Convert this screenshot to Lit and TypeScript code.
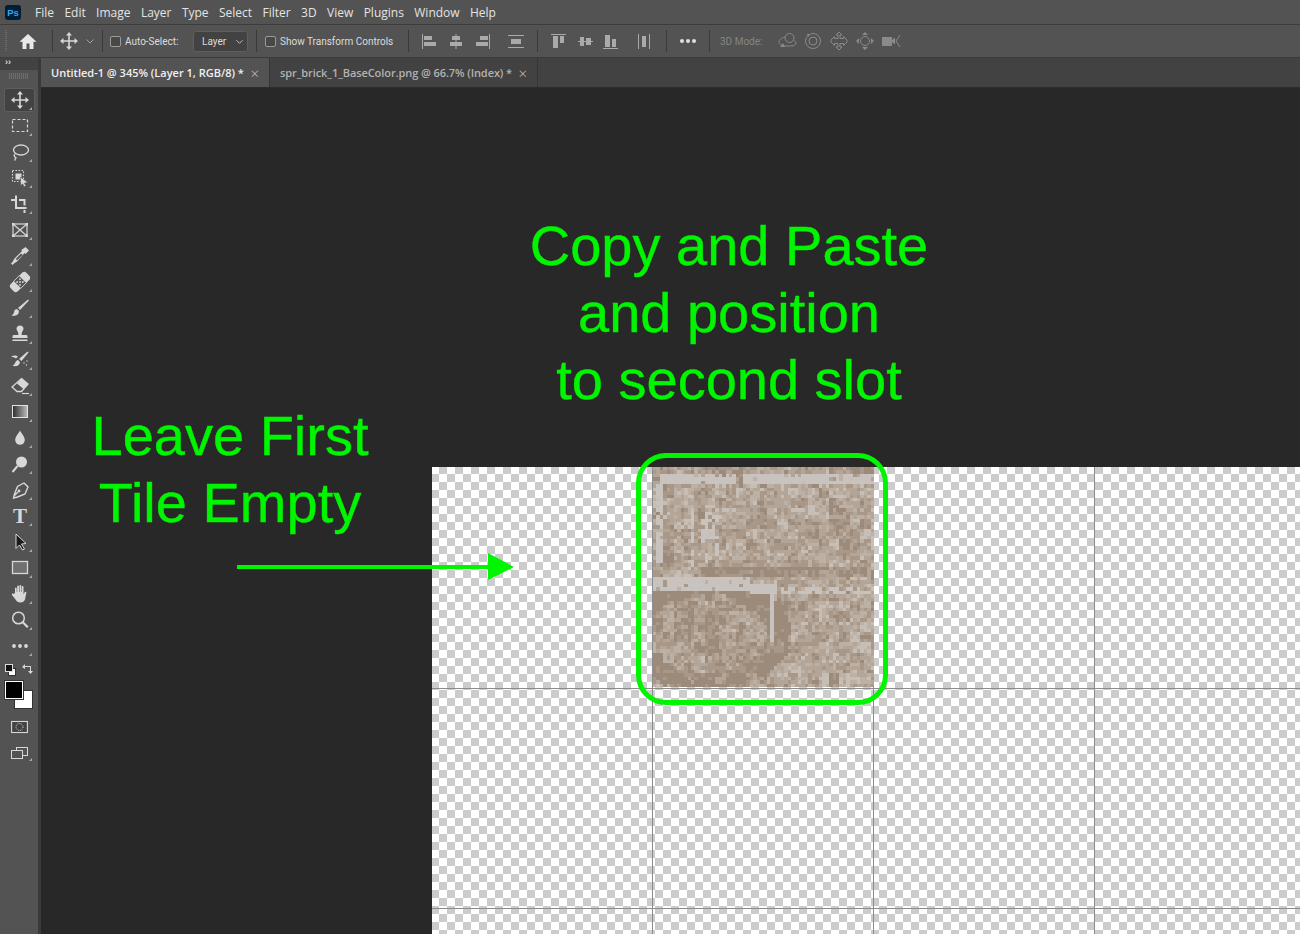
import { LitElement, html, css, svg } from 'lit';
import { customElement } from 'lit/decorators.js';

const MENU = ['File', 'Edit', 'Image', 'Layer', 'Type', 'Select', 'Filter', '3D', 'View', 'Plugins', 'Window', 'Help'];

// tile is 64x64 image pixels at 345%, so it gets generated instead of listed
function buildTile() {
  let seed = 4242;
  const rand = () => {
    seed = (seed + 0x6d2b79f5) | 0;
    let t = Math.imul(seed ^ (seed >>> 15), 1 | seed);
    t = (t + Math.imul(t ^ (t >>> 7), 61 | t)) ^ t;
    return ((t ^ (t >>> 14)) >>> 0) / 4294967296;
  };
  // coarse noise so the colours clump like the real texture
  const coarse: number[][] = [];
  for (let r = 0; r < 24; r++) {
    coarse.push([]);
    for (let c = 0; c < 24; c++) coarse[r].push(rand() - 0.5);
  }
  const cells = [];
  for (let r = 0; r < 64; r++) {
    for (let c = 0; c < 64; c++) {
      let v = 0.54 + (rand() - 0.5) * 0.42 + coarse[Math.floor(r / 3)][Math.floor(c / 3)] * 0.4;
      // lower left brick: dark rim, mottled inside
      const dx = (c - 15) / 24;
      const dy = (r - 48) / 16;
      const d = Math.sqrt(dx * dx + dy * dy);
      if (r > 35 && c < 40) {
        if (d < 0.72) v -= 0.12;
        else if (d < 1.02) v -= 0.36;
      }
      // dark joint under the top brick
      if (r >= 29 && r <= 31 && c > 13 && c < 62) v -= 0.3;
      if (r >= 25 && r <= 28 && c > 1 && c < 8) v -= 0.22;
      if (r < 2) v -= 0.1;
      let light = false;
      if (r >= 2 && r <= 4 && c > 1 && !(c > 23 && c < 26) && rand() > 0.1) light = true;
      const midTop = c < 28 ? 32 : c < 36 ? 34 : 35;
      const midBot = c < 28 ? 35 : c < 36 ? 36 : 36;
      if (r >= midTop && r <= midBot && rand() > (c < 36 ? 0.08 : 0.3)) light = true;
      if (c >= 1 && c <= 2 && r > 4 && r < 28 && rand() > 0.25) light = true;
      if (c === 34 && r > 35 && r < 51) light = true;
      if ((c === 11 || c === 15 || c === 18) && r > 12 && r < 29 && rand() > 0.45) light = true;
      if (c >= 14 && c <= 18 && r > 12 && r < 22 && rand() > 0.6) light = true;
      let fill = '#b3a699';
      if (light) fill = '#c8c3be';
      else if (v < 0.3) fill = '#9c8a7a';
      else if (v < 0.46) fill = '#a99888';
      else if (v < 0.62) fill = '#b3a699';
      else if (v < 0.76) fill = '#bdb0a4';
      else fill = '#c7beb5';
      cells.push({ r, c, fill });
    }
  }
  return cells;
}
const TILE = buildTile();

const ICON = '#d8d8d8';

const moveIcon = svg`<g fill="${ICON}"><path d="M9.200 4h1.600v12H9.200zM4 9.200h12v1.600H4z"/><path d="M10 1l3 3.500H7zM10 19l-3-3.500h6zM1 10l3.500-3v6zM19 10l-3.500 3V7z"/></g>`;

const tools = [
  { i: moveIcon, s: true },
  { i: svg`<rect x="2.500" y="3.500" width="15" height="12" fill="none" stroke="${ICON}" stroke-width="1.200" stroke-dasharray="3 2"/>` },
  { i: svg`<g fill="none" stroke="${ICON}" stroke-width="1.300"><ellipse cx="11" cy="8" rx="7.500" ry="5"/><path d="M5 12c-2 2 0 3 1 4-1 1-1 2-1.500 2.500"/></g>` },
  { i: svg`<rect x="2.500" y="2.500" width="11" height="11" fill="none" stroke="${ICON}" stroke-width="1.100" stroke-dasharray="1.500 1.500"/><rect x="5.500" y="5.500" width="6" height="6" fill="${ICON}"/><path d="M10.500 9l7.500 5.500-3.500.5 1.500 3-2 .8-1.400-3-2 2z" fill="${ICON}" stroke="#535353" stroke-width=".6"/>` },
  { i: svg`<path d="M1 5h4V1.500h2V13h9.500v2H5V7H1zM9 5h6.500v6.500h-2V7H9zM13.500 16h2v3h-2z" fill="${ICON}"/>` },
  { i: svg`<g fill="none" stroke="${ICON}" stroke-width="1.200"><rect x="3" y="4" width="14" height="12"/><path d="M3 4l14 12M17 4L3 16"/></g><g fill="${ICON}"><rect x="2" y="3" width="2.500" height="2.500"/><rect x="15.500" y="3" width="2.500" height="2.500"/><rect x="2" y="14.500" width="2.500" height="2.500"/><rect x="15.500" y="14.500" width="2.500" height="2.500"/></g>` },
  { i: svg`<path d="M15.500 1l3.500 3.500-3.500 3.500-1-1-6.500 7.500c-1.500 1.500-2.500 2-4 3L2.500 19l-1.500-1.500 1.500-1.500c1-1.500 1-2.500 2.500-4L12 5l-.8-1 1.600-1z" fill="${ICON}"/><path d="M11 7.500L5.800 13l1.300 1.300 5.400-5.300z" fill="#535353"/>` },
  { i: svg`<g transform="rotate(-45 10 10)"><rect x="-1" y="5" width="22" height="10" rx="3" fill="${ICON}"/><rect x="6" y="5" width="8" height="10" fill="#535353" stroke="${ICON}" stroke-width=".8"/><g fill="${ICON}"><circle cx="8" cy="8" r=".9"/><circle cx="12" cy="8" r=".9"/><circle cx="8" cy="12" r=".9"/><circle cx="12" cy="12" r=".9"/><circle cx="10" cy="10" r=".9"/></g></g>` },
  { i: svg`<path d="M18 1.500L8 10l2 2 9-9.500zM7 11c-3 0-2.500 3-3.500 4.500C3 16.500 2 17 1.500 17.500c3 1 7.500 0 7.500-4.500z" fill="${ICON}"/>` },
  { i: svg`<path d="M10 1.500c2.200 0 3.500 1.500 3.500 3.300 0 2-1.800 2.700-1.800 4.700V11H16c1 0 1.500.6 1.500 1.500V14h-15v-1.500C2.500 11.600 3 11 4 11h4.300V9.500c0-2-1.800-2.700-1.800-4.700C6.500 3 7.800 1.500 10 1.500zM2.500 15.500h15V17h-15z" fill="${ICON}"/>` },
  { i: svg`<path d="M17.500 1.500l1 1L11.500 11 9 9zM8 10c-2.500.5-2.500 3-3.500 4-.5.8-1 1-2 1.500 2.500 1.500 7 1 7.500-3.500zM1 6.500c3-1.500 5-1.500 7 0L6 8.500C4.500 7.500 3 7 1 6.500z" fill="${ICON}"/><g fill="${ICON}"><circle cx="14" cy="13" r=".7"/><circle cx="17" cy="11" r=".7"/><circle cx="16.500" cy="15" r=".7"/></g>` },
  { i: svg`<path d="M11.500 2.500L18 8l-6.500 7.500H7L2 11z" fill="none" stroke="${ICON}" stroke-width="1.300"/><path d="M11.500 2.500L18 8l-4.500 5L7 7.500z" fill="${ICON}"/><path d="M12 17.500h7" stroke="${ICON}" stroke-width="1.200"/>` },
  { i: svg`<defs><linearGradient id="gr"><stop offset="0" stop-color="#2c2c2c"/><stop offset="1" stop-color="#bdbdbd"/></linearGradient></defs><rect x="2.500" y="3.500" width="15" height="12" fill="url(#gr)" stroke="#e2e2e2" stroke-width="1"/>` },
  { i: svg`<path d="M10 2.500c1.500 3 4.800 6 4.800 9.500a4.800 4.800 0 01-9.600 0c0-3.500 3.300-6.500 4.800-9.500z" fill="${ICON}"/>` },
  { i: svg`<circle cx="11.500" cy="8" r="5.500" fill="${ICON}"/><path d="M7.500 12L2.500 18" stroke="${ICON}" stroke-width="2"/>` },
  { i: svg`<path d="M14 3l4 4-3 7-7.500 3-4 1 1-4 3-7.500zM3.500 16.500L8 12" fill="none" stroke="${ICON}" stroke-width="1.400"/><circle cx="9" cy="11" r="1.400" fill="${ICON}"/>` },
  { i: svg`<text x="10" y="17" text-anchor="middle" font-family="Liberation Serif, serif" font-weight="700" font-size="21" fill="${ICON}">T</text>` },
  { i: svg`<path d="M6 2l10 9.500-4.500.5 3 5-2 1-3-5-3.500 3.500z" fill="#1b1b1b" stroke="${ICON}" stroke-width="1"/>` },
  { i: svg`<rect x="2.500" y="3.500" width="15" height="12" fill="#707070" stroke="${ICON}" stroke-width="1.300"/>` },
  { i: svg`<path d="M5 9V4.500c0-1.200 1.600-1.200 1.700 0V8h.5V2.500c0-1.200 1.800-1.200 1.800 0V8h.5V2c0-1.200 1.800-1.200 1.800 0v6h.5V3c0-1.200 1.700-1.200 1.700 0v7.500l1-2c.7-1.300 2.300-.7 1.800.5L15 15.500c-.8 1.800-2.300 3-4.500 3-2.500 0-4-1-5-3L2 11c-.7-1.200.8-2 1.700-1z" fill="${ICON}"/>` },
  { i: svg`<circle cx="8.500" cy="8" r="5.800" fill="none" stroke="${ICON}" stroke-width="1.500"/><path d="M12.800 12.300l5 5" stroke="${ICON}" stroke-width="2.200"/>` },
  { i: svg`<g fill="${ICON}"><circle cx="4" cy="10" r="1.900"/><circle cx="10" cy="10" r="1.900"/><circle cx="16" cy="10" r="1.900"/></g>` },
];

const alignIcons = [
  svg`<path d="M2 3h1v15H2zM4 5h8v4H4zM4 11h12v4H4z" fill="#aaa"/>`,
  svg`<path d="M9.500 3h1v15h-1zM6 5h8v4H6zM4 11h12v4H4z" fill="#aaa"/>`,
  svg`<path d="M17 3h1v15h-1zM8 5h8v4H8zM4 11h12v4H4z" fill="#aaa"/>`,
];
const alignDist = svg`<path d="M2 4h16v1H2zM2 16h16v1H2zM5 8h10v5H5z" fill="#aaa"/>`;
const valignIcons = [
  svg`<path d="M2 3h15v1H2zM4 5h5v12H4zM11 5h4v7h-4z" fill="#aaa"/>`,
  svg`<path d="M3 10h15v1H3zM5 6h4v9H5zM11 7h5v7h-5z" fill="#aaa"/>`,
  svg`<path d="M2 17h15v1H2zM4 4h5v12H4zM11 8h4v8h-4z" fill="#aaa"/>`,
];
const valignDist = svg`<path d="M4 3h1v15H4zM15 3h1v15h-1zM8 5h4v11H8z" fill="#aaa"/>`;
const threeD = [
  svg`<g fill="none" stroke="#8a8a8a" stroke-width="1"><circle cx="12.500" cy="7" r="4.500"/><path d="M8 6c-4 1-6 3-6 5s3 4 6 4h6c3 0 5-1 5-3 0-1-1-2-2-2"/></g><path d="M3 16l3-4 2 4z" fill="#8a8a8a"/>`,
  svg`<g fill="none" stroke="#8a8a8a" stroke-width="1"><circle cx="10" cy="10" r="7.500" stroke-dasharray="30 3"/><circle cx="10" cy="10" r="4"/></g><path d="M4 3l4 0-3 3z" fill="#8a8a8a"/>`,
  svg`<path d="M10 1l3 3h-2v3.500h3.500V5.500l3.500 3.500v2l-3.500 3.500v-2H11V16h2l-3 3-3-3h2v-3.500H5.500v2L2 11V9l3.500-3.500v2H9V4H7z" fill="none" stroke="#8a8a8a"/>`,
  svg`<path d="M10 1l3 3H7zM10 19l-3-3h6zM1 10l3-3v6zM19 10l-3 3V7z" fill="#8a8a8a"/><circle cx="10" cy="10" r="4.500" fill="none" stroke="#8a8a8a"/>`,
  svg`<path d="M1 6h10v9H1zM11 9l3-2.500v7L11 11z" fill="#8a8a8a"/><path d="M19 4l-4 6 4 6" fill="none" stroke="#8a8a8a"/>`,
];

const V_LINES = [220, 441, 662];
const H_LINES = [221, 441];

@customElement('app-root')
export class AppRoot extends LitElement {
  static styles = css`
    :host {
      display: flex;
      flex-direction: column;
      width: 1300px;
      height: 934px;
      overflow: hidden;
      background: #282828;
      font-family: 'Open Sans', 'Noto Sans', sans-serif;
      color: #e4e4e4;
    }
    svg { display: block; }
    .menubar {
      height: 24px;
      flex: none;
      background: #535353;
      border-bottom: 1px solid #3c3c3c;
      display: flex;
      align-items: center;
      font-size: 12px;
    }
    .logo {
      width: 16px;
      height: 15px;
      margin: 0 14px 0 5px;
      border-radius: 3px;
      background: #001e36;
      color: #31a8ff;
      font: 700 9.500px 'Liberation Sans', sans-serif;
      display: flex;
      align-items: center;
      justify-content: center;
    }
    .menu-item { margin-right: 10.400px; }
    .options {
      height: 32px;
      flex: none;
      background: #535353;
      border-bottom: 1px solid #3c3c3c;
      display: flex;
      align-items: center;
      font: 10px Roboto, sans-serif;
      color: #dcdcdc;
    }
    .grip {
      width: 2px;
      height: 22px;
      margin-left: 5px;
      background: repeating-linear-gradient(#6a6a6a 0 1px, transparent 1px 2px);
    }
    .home { margin: 0 14px 0 11px; }
    .sep { width: 1px; height: 22px; background: #3a3a3a; flex: none; }
    .move-opt { margin-left: 6px; }
    .chev { margin: 0 7px 0 6px; }
    .check {
      width: 9px;
      height: 9px;
      border: 1px solid #9a9a9a;
      border-radius: 2px;
      background: #484848;
      flex: none;
    }
    .auto { margin-left: 7px; }
    .label { margin-left: 4px; white-space: nowrap; width: 54px; }
    .select {
      width: 42px;
      height: 19px;
      margin: 0 8px 0 14px;
      background: #424242;
      border: 1px solid #5f5f5f;
      border-radius: 3px;
      display: flex;
      align-items: center;
      justify-content: space-between;
      padding: 0 3px 0 8px;
    }
    .transform { margin-left: 8px; }
    .label-long { margin-left: 4px; width: 113px; white-space: nowrap; }
    .gap15 { width: 15px; flex: none; }
    .opt-icon { width: 26px; height: 20px; display: flex; justify-content: center; flex: none; }
    .gap8 { width: 8px; flex: none; }
    .gap9 { width: 9px; flex: none; }
    .gap7 { width: 7px; flex: none; }
    .dim { color: #858585; margin: 0 12px 0 10px; width: 42px; white-space: nowrap; }
    .main { flex: 1; display: flex; min-height: 0; }
    .toolbar {
      width: 38px;
      flex: none;
      background: #535353;
      border-right: 3px solid #3a3a3a;
      display: flex;
      flex-direction: column;
    }
    .collapse {
      height: 12px;
      flex: none;
      background: #424242;
      padding-left: 5px;
      font: 700 9px/9px 'Liberation Sans', sans-serif;
      color: #dcdcdc;
    }
    .tool-grip {
      height: 6px;
      margin: 3px 9px 8px;
      background: repeating-linear-gradient(90deg, #6e6e6e 0 1px, transparent 1px 2px);
      flex: none;
    }
    .tool { height: 26px; flex: none; position: relative; }
    .tool-on::before {
      content: '';
      position: absolute;
      left: 4px;
      top: 1px;
      width: 31px;
      height: 24px;
      box-sizing: border-box;
      background: #424242;
      border: 1px solid #5e5e5e;
      border-radius: 3px;
    }
    .tool svg { position: relative; margin-left: 5px; }
    .mini {
      height: 14px;
      margin-top: 4px;
      display: flex;
      align-items: center;
      padding-left: 5px;
      gap: 6px;
      flex: none;
    }
    .swatches { height: 29px; margin-top: 4px; position: relative; flex: none; }
    .fg, .bg { position: absolute; box-sizing: border-box; width: 19px; height: 19px; }
    .bg { left: 14px; top: 9px; background: #fff; border: 1px solid #333; }
    .fg { left: 5px; top: 0; width: 18px; height: 18px; background: #000; border: 1px solid #fff; outline: 1px solid #333; }
    .mask { margin: 10px 0 0 11px; flex: none; }
    .screen { margin: 12px 0 0 11px; flex: none; }
    .right { flex: 1; min-width: 0; display: flex; flex-direction: column; }
    .tabs {
      height: 29px;
      flex: none;
      background: #424242;
      border-bottom: 1px solid #2c2c2c;
      display: flex;
      font-size: 11px;
      font-weight: 600;
    }
    .tab {
      display: flex;
      align-items: center;
      justify-content: space-between;
      box-sizing: border-box;
      padding: 0 10px;
      white-space: nowrap;
      border-right: 1px solid #353535;
    }
    .tab-first { width: 229px; background: #535353; color: #f0f0f0; }
    .tab-second { width: 268px; color: #b2b2b2; letter-spacing: -0.08px; }
    .close { font-weight: 300; font-size: 15px; color: #c0c0c0; }
    .work { flex: 1; position: relative; background: #282828; overflow: hidden; }
    .doc {
      position: absolute;
      left: 391px;
      top: 379px;
      right: 0;
      bottom: 0;
      background: conic-gradient(#cccccc 25%, #ffffff 0 50%, #cccccc 0 75%, #ffffff 0);
      background-size: 16px 16px;
      background-position: -1px -1px;
    }
    .vline, .hline { position: absolute; background: #8c8c8c; }
    .vline { top: 0; bottom: 0; width: 1px; }
    .hline { left: 0; right: 0; height: 1px; }
    .tile { position: absolute; left: 221px; top: 0; width: 221px; height: 220px; }
    .ring {
      position: absolute;
      left: 595px;
      top: 365px;
      width: 252px;
      height: 252px;
      box-sizing: border-box;
      border: 5px solid #00f500;
      border-radius: 30px;
    }
    .note {
      position: absolute;
      text-align: center;
      font: 56px/67px 'Liberation Sans', Arial, sans-serif;
      color: #00f500;
      white-space: nowrap;
      -webkit-text-stroke: 0.4px #00f500;
    }
    .note-copy { left: 388px; top: 124px; width: 600px; }
    .note-leave { left: -1px; top: 314px; width: 380px; }
    .arrow { position: absolute; left: 190px; top: 458px; }
  `;

  private renderToolIcon(icon: unknown) {
    return svg`<g transform="translate(5 3)">${icon}</g><path d="M24 23h3v-3z" fill="#a8a8a8"/>`;
  }

  render() {
    return html`
      <div class="menubar">
        <div class="logo">Ps</div>
        ${MENU.map((m) => html`<span class="menu-item">${m}</span>`)}
      </div>
      <div class="options">
        <div class="grip"></div>
        <svg class="home" width="20" height="20" viewBox="0 0 20 20"><path d="M10 3L1.500 10.800H4.500V18h4v-5.500h3V18h4v-7.200h3z" fill="#e8e8e8"/></svg>
        <div class="sep"></div>
        <svg class="move-opt" width="20" height="20" viewBox="0 0 20 20">${moveIcon}</svg>
        <svg class="chev" width="10" height="10" viewBox="0 0 10 10"><path d="M1.500 3.500L5 7l3.500-3.500" fill="none" stroke="#a0a0a0"/></svg>
        <div class="sep"></div>
        <div class="check auto"></div>
        <span class="label">Auto-Select:</span>
        <div class="select">
          <span>Layer</span>
          <svg width="9" height="9" viewBox="0 0 10 10"><path d="M1.500 3.500L5 7l3.500-3.500" fill="none" stroke="#c8c8c8"/></svg>
        </div>
        <div class="sep"></div>
        <div class="check transform"></div>
        <span class="label-long">Show Transform Controls</span>
        <div class="gap15"></div>
        <div class="sep"></div>
        <div class="gap8"></div>
        ${alignIcons.map((a) => html`<div class="opt-icon"><svg width="20" height="20" viewBox="0 0 20 20">${a}</svg></div>`)}
        <div class="gap8"></div>
        <div class="opt-icon"><svg width="20" height="20" viewBox="0 0 20 20">${alignDist}</svg></div>
        <div class="gap8"></div>
        <div class="sep"></div>
        <div class="gap8"></div>
        ${valignIcons.map((a) => html`<div class="opt-icon"><svg width="20" height="20" viewBox="0 0 20 20">${a}</svg></div>`)}
        <div class="gap7"></div>
        <div class="opt-icon"><svg width="20" height="20" viewBox="0 0 20 20">${valignDist}</svg></div>
        <div class="gap9"></div>
        <div class="sep"></div>
        <div class="gap8"></div>
        <div class="opt-icon"><svg width="20" height="20" viewBox="0 0 20 20"><g fill="#e0e0e0"><circle cx="4" cy="10" r="2"/><circle cx="10" cy="10" r="2"/><circle cx="16" cy="10" r="2"/></g></svg></div>
        <div class="gap8"></div>
        <div class="sep"></div>
        <span class="dim">3D Mode:</span>
        ${threeD.map((a) => html`<div class="opt-icon"><svg width="20" height="20" viewBox="0 0 20 20">${a}</svg></div>`)}
      </div>
      <div class="main">
        <div class="toolbar">
          <div class="collapse">››</div>
          <div class="tool-grip"></div>
          ${tools.map((t) => html`
            <div class="tool ${t.s ? 'tool-on' : ''}">
              <svg width="30" height="26" viewBox="0 0 30 26">${this.renderToolIcon(t.i)}</svg>
            </div>`)}
          <div class="mini">
            <svg width="11" height="12" viewBox="0 0 11 12"><rect x="3.500" y="4.500" width="7" height="7" fill="#fff" stroke="#333"/><rect x=".5" y=".5" width="7" height="7" fill="#111" stroke="#ddd"/></svg>
            <svg width="11" height="12" viewBox="0 0 11 12"><path d="M0 3l3-3v2h6v5h2l-2.500 3L6 7h2V3H3v2z" fill="#d8d8d8"/></svg>
          </div>
          <div class="swatches"><div class="bg"></div><div class="fg"></div></div>
          <svg class="mask" width="17" height="14" viewBox="0 0 17 14"><rect x=".6" y="1.500" width="15.800" height="11" fill="#424242" stroke="#d8d8d8" stroke-width="1.100"/><circle cx="8.500" cy="7" r="3.500" fill="none" stroke="#d8d8d8" stroke-dasharray="1 1"/></svg>
          <svg class="screen" width="22" height="16" viewBox="0 0 22 16"><rect x="5.500" y="1.500" width="11" height="8" fill="none" stroke="#d8d8d8"/><rect x=".5" y="4.500" width="11" height="8" fill="#535353" stroke="#d8d8d8"/><path d="M18 15h3v-3z" fill="#a8a8a8"/></svg>
        </div>
        <div class="right">
          <div class="tabs">
            <div class="tab tab-first"><span>Untitled-1 @ 345% (Layer 1, RGB/8) *</span><span class="close">×</span></div>
            <div class="tab tab-second"><span>spr_brick_1_BaseColor.png @ 66.7% (Index) *</span><span class="close">×</span></div>
          </div>
          <div class="work">
            <div class="doc">
              ${H_LINES.map((y) => html`<div class="hline" style="top:${y}px"></div>`)}
              ${V_LINES.map((x) => html`<div class="vline" style="left:${x}px"></div>`)}
              <svg class="tile" viewBox="0 0 64 64" preserveAspectRatio="none" shape-rendering="crispEdges">
                ${TILE.map((p) => svg`<rect x="${p.c}" y="${p.r}" width="1" height="1" fill="${p.fill}"/>`)}
              </svg>
            </div>
            <div class="ring"></div>
            <div class="note note-copy">Copy and Paste<br />and position<br />to second slot</div>
            <div class="note note-leave">Leave First<br />Tile Empty</div>
            <svg class="arrow" width="290" height="40" viewBox="0 0 290 40">
              <path d="M6 19h252v4H6z" fill="#00f500"/>
              <path d="M257 7l26 14-26 13z" fill="#00f500"/>
            </svg>
          </div>
        </div>
      </div>
    `;
  }
}
